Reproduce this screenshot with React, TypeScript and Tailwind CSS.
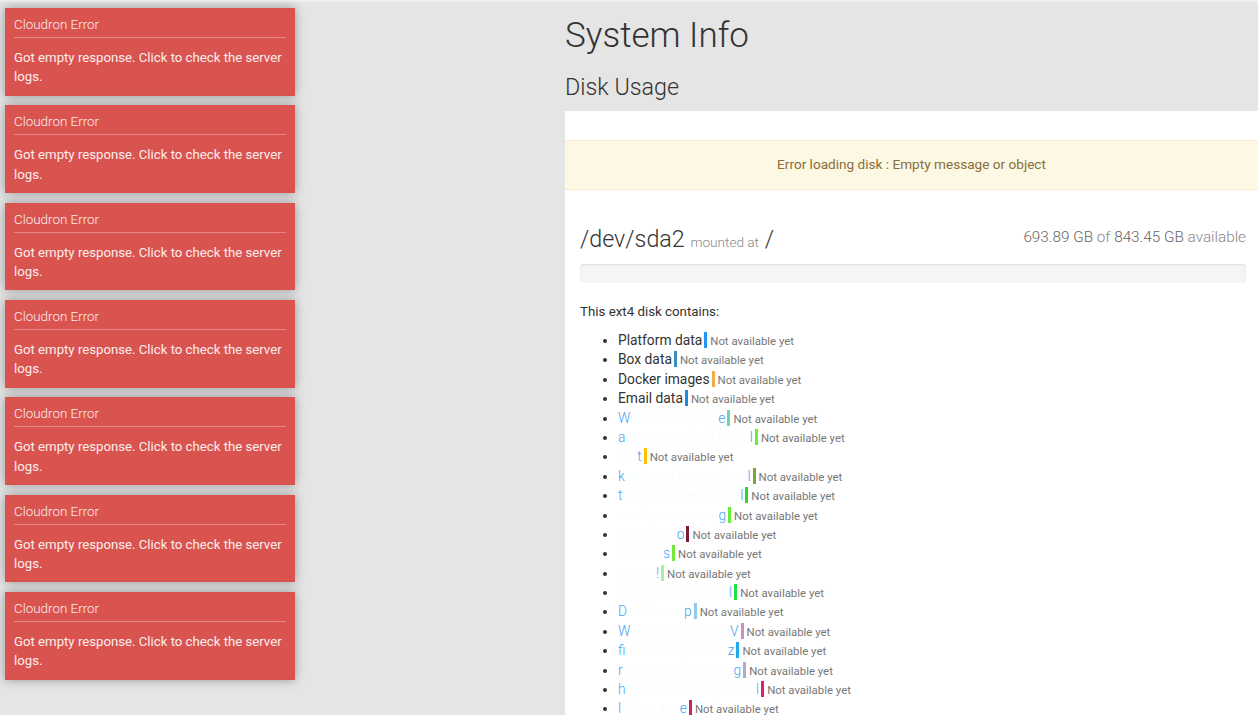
import React from "react";

type Item = { label?: string; name?: [string, string, string]; color: string };

const items: Item[] = [
  { label: "Platform data", color: "#2196f3" },
  { label: "Box data", color: "#3a8fc0" },
  { label: "Docker images", color: "#f0ad4e" },
  { label: "Email data", color: "#1e88e5" },
  { name: ["W", "ebmail.exampl", "e"], color: "#6dd5b5" },
  { name: ["a", "pps.example-digitals", "l"], color: "#66f033" },
  { name: ["", "net", "t"], color: "#ffc107" },
  { name: ["k", "anboard.example.ne", "l"], color: "#78a832" },
  { name: ["t", "eamspace.example", "l"], color: "#2ad62a" },
  { name: ["", "wordpress.exam", "g"], color: "#66ee33" },
  { name: ["", "chatroom", "o"], color: "#7a1a35" },
  { name: ["", "wikisite", "s"], color: "#77e63a" },
  { name: ["", "coopp", "!"], color: "#aaeea0" },
  { name: ["", "gitlab.example.intr", "l"], color: "#22dd44" },
  { name: ["D", "ashboard", "p"], color: "#90caf0" },
  { name: ["W", "ordpress-site.2.x", "V"], color: "#c890c0" },
  { name: ["f", "iles.example.com", "z"], color: "#20a8ee" },
  { name: ["r", "ocket.example.org", "g"], color: "#b8a8cc" },
  { name: ["h", "ttps-mail.example.net", "l"], color: "#ee1a66" },
  { name: ["l", "ibrary.age", "e"], color: "#cc2060" },
];

function Notification() {
  return (
    <div className="w-[290px] bg-[#d9534f] px-[9px] pt-[7px] pb-[9px] text-[13.2px] leading-[19.4px] text-white/90 shadow-[0_0_10px_rgba(0,0,0,0.35)]">
      <div className="border-b border-white/30 pb-[2px] text-[13.4px] font-light leading-[20px]">Cloudron Error</div>
      <div className="mt-[10px]">Got empty response. Click to check the server logs.</div>
    </div>
  );
}

export default function App() {
  return (
    <div
      className="relative h-[715px] w-full overflow-hidden bg-[#e5e5e5] text-[#333]"
      style={{ fontFamily: "Roboto, 'Liberation Sans', sans-serif" }}
    >
      <div className="h-[2px] bg-[#efefef]" />

      {/* Notifications */}
      <div className="absolute left-[5px] top-[8px] flex flex-col gap-[9.5px]">
        {Array.from({ length: 7 }).map((_, i) => (
          <Notification key={i} />
        ))}
      </div>

      <div className="flex">
        <div className="w-[565px] shrink-0" />
        <div className="flex-1">
          <h1 className="mt-[15px] text-[35px] font-light leading-[38.5px] text-[#333]">System Info</h1>
          <h2 className="mt-[19px] text-[23.3px] font-light leading-[25.6px] text-[#333]">Disk Usage</h2>

          <div className="mt-[11px] min-h-[700px] bg-white pt-[29px]">
            <div className="border-y border-[#faebcc] bg-[#fcf8e3] py-[14px] text-center text-[13.6px] leading-[19.4px] text-[#8a6d3b]">
              Error loading disk : Empty message or object
            </div>

            <div className="px-[15px] pr-[12px]">
              <div className="mt-[37px] flex items-end justify-between">
                <div className="text-[23.3px] font-light leading-[25.6px] text-[#333]">
                  /dev/sda2 <span className="text-[13.6px] text-[#888]">mounted at</span> /
                </div>
                <div className="mb-[8px] text-[15.3px] font-light leading-[19.4px] text-[#666]">
                  693.89 GB <span className="text-[#888]">of</span> 843.45 GB{" "}
                  <span className="text-[#888]">available</span>
                </div>
              </div>

              <div className="mt-[9px] h-[19px] rounded-[4px] bg-[#f5f5f5] shadow-[inset_0_1px_2px_rgba(0,0,0,0.1)]" />

              <p className="mt-[19px] text-[13.3px] leading-[19.4px] text-[#333]">This ext4 disk contains:</p>

              <ul className="mt-[9.5px] list-disc pl-[38px] text-[13.8px] leading-[19.4px]">
                {items.map((it, i) => (
                  <li key={i} className="h-[19.4px] whitespace-nowrap">
                    {it.label ? (
                      <span className="text-[#333]">{it.label}</span>
                    ) : (
                      <span className="font-light text-[#4aa3f0]">
                        {it.name![0]}
                        <span className="text-[#4aa3f0]/5">{it.name![1]}</span>
                        {it.name![2]}
                      </span>
                    )}
                    <span
                      className="ml-[2px] mr-[3px] inline-block h-[16px] w-[3px] align-[-3px]"
                      style={{ backgroundColor: it.color }}
                    />
                    <span className="text-[11.4px] text-[#777]">Not available yet</span>
                  </li>
                ))}
              </ul>
            </div>
          </div>
        </div>
      </div>
    </div>
  );
}
